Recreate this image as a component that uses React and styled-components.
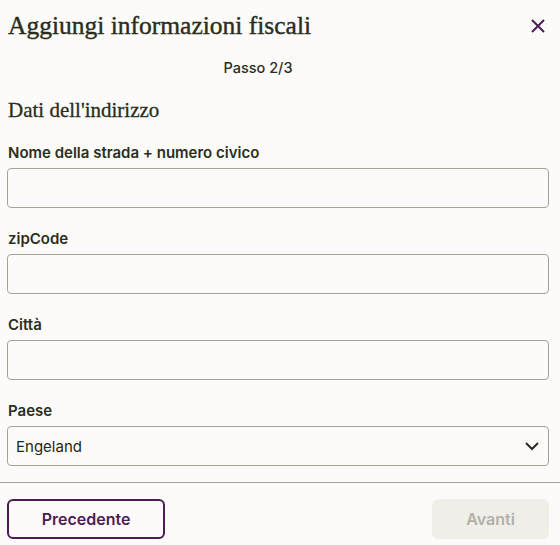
import styled, { createGlobalStyle } from 'styled-components'

const GlobalStyle = createGlobalStyle`
  html, body {
    margin: 0;
    padding: 0;
    background: #fcfbf9;
  }
  * {
    box-sizing: border-box;
  }
`

const COLOR_TEXT = '#2a2e1d'
const COLOR_PURPLE = '#4d1b54'
const COLOR_BORDER = '#a5a396'

const Modal = styled.div`
  width: 560px;
  height: 545px;
  background: #fcfbf9;
  color: ${COLOR_TEXT};
  font-family: Inter, 'Open Sans', sans-serif;
  display: flex;
  flex-direction: column;
`

const Body = styled.div`
  padding: 0 11px 16px 7px;
`

const Header = styled.div`
  display: flex;
  align-items: center;
  justify-content: space-between;
  height: 52px;
  padding-left: 1px;
`

const Title = styled.h1`
  margin: 0;
  font-family: 'Liberation Serif', 'DejaVu Serif', serif;
  font-weight: 400;
  font-size: 25.5px;
  -webkit-text-stroke: 0.4px ${COLOR_TEXT};
`

const CloseButton = styled.button`
  border: none;
  background: none;
  padding: 0;
  width: 24px;
  height: 24px;
  display: flex;
  align-items: center;
  justify-content: center;
  margin-right: -1px;
  color: ${COLOR_PURPLE};
`

const Step = styled.div`
  text-align: center;
  padding-right: 40px;
  font-size: 14.5px;
  font-weight: 500;
  line-height: 32px;
`

const SectionTitle = styled.h2`
  margin: 14px 0 21px 1px;
  line-height: 24px;
  font-family: 'Liberation Serif', 'DejaVu Serif', serif;
  font-weight: 400;
  font-size: 21px;
  -webkit-text-stroke: 0.3px ${COLOR_TEXT};
`

const Field = styled.div`
  display: flex;
  flex-direction: column;
  gap: 5px;
  margin-bottom: 21px;

  &:last-child {
    margin-bottom: 0;
  }
`

const Label = styled.label`
  font-size: 15px;
  font-weight: 600;
  padding-left: 1px;
  line-height: 20px;
`

const Input = styled.div`
  height: 40px;
  border: 1px solid ${COLOR_BORDER};
  border-radius: 4px;
  display: flex;
  align-items: center;
  justify-content: space-between;
  padding: 0 8px;
  font-size: 15px;
  color: #23261a;
`

const Divider = styled.hr`
  margin: 0;
  border: none;
  border-top: 1px solid ${COLOR_BORDER};
`

const Footer = styled.div`
  display: flex;
  justify-content: space-between;
  padding: 16px 11px 0 7px;
`

const Button = styled.button`
  height: 40px;
  border-radius: 6px;
  font-family: Inter, 'Open Sans', sans-serif;
  font-size: 16px;
  font-weight: 600;
  width: ${({ $width }) => $width}px;
  border: ${({ $outline }) => ($outline ? `2px solid ${COLOR_PURPLE}` : 'none')};
  background: ${({ $outline }) => ($outline ? 'transparent' : '#efeee9')};
  color: ${({ $outline }) => ($outline ? COLOR_PURPLE : '#b3b0a8')};
`

const fields = [
  { label: 'Nome della strada + numero civico' },
  { label: 'zipCode' },
  { label: 'Città' },
]

export default function App() {
  return (
    <>
      <GlobalStyle />
      <Modal>
        <Body>
          <Header>
            <Title>Aggiungi informazioni fiscali</Title>
            <CloseButton>
              <svg width="16" height="16" viewBox="0 0 16 16">
                <path d="M2 2 L14 14 M14 2 L2 14" stroke="currentColor" strokeWidth="2" />
              </svg>
            </CloseButton>
          </Header>
          <Step>Passo 2/3</Step>
          <SectionTitle>Dati dell'indirizzo</SectionTitle>
          {fields.map((f) => (
            <Field key={f.label}>
              <Label>{f.label}</Label>
              <Input />
            </Field>
          ))}
          <Field>
            <Label>Paese</Label>
            <Input>
              Engeland
              <svg width="16" height="16" viewBox="0 0 16 16">
                <path d="M2 5 L8 11 L14 5" fill="none" stroke={COLOR_TEXT} strokeWidth="2" />
              </svg>
            </Input>
          </Field>
        </Body>
        <Divider />
        <Footer>
          <Button $outline $width={158}>Precedente</Button>
          <Button $width={117}>Avanti</Button>
        </Footer>
      </Modal>
    </>
  )
}
